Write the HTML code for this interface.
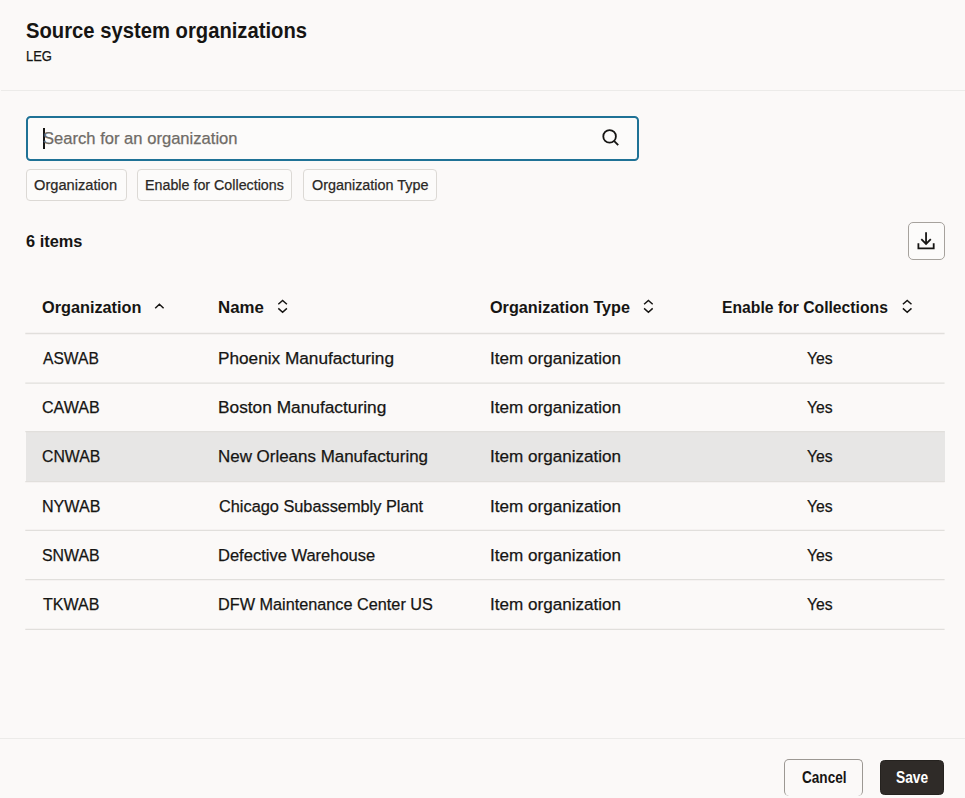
<!DOCTYPE html>
<html><head><meta charset="utf-8"><style>
html,body{margin:0;padding:0;}
body{width:965px;height:798px;overflow:hidden;background:#fbf9f8;position:relative;font-family:"Liberation Sans",sans-serif;}
.t{position:absolute;white-space:nowrap;transform-origin:0 0;}
.abs{position:absolute;box-sizing:border-box;}
</style></head><body>
<div class="abs" style="left:1px;top:90px;width:964px;height:1px;background:#ecebe9"></div>
<div class="abs" style="left:25.5px;top:116px;width:613.5px;height:44.6px;border:2px solid #1f7296;border-radius:4.5px;background:#fcfbfa"></div>
<div class="abs" style="left:42.7px;top:128px;width:2px;height:20.6px;background:#161513"></div>
<div class="abs" style="left:25.8px;top:169.3px;width:100.8px;height:31.9px;border:1px solid #dcd9d5;border-radius:4px;background:#fcfbfa"></div>
<div class="abs" style="left:137.2px;top:169.3px;width:155px;height:31.9px;border:1px solid #dcd9d5;border-radius:4px;background:#fcfbfa"></div>
<div class="abs" style="left:303.3px;top:169.3px;width:133.6px;height:31.9px;border:1px solid #dcd9d5;border-radius:4px;background:#fcfbfa"></div>
<div class="abs" style="left:907.5px;top:222px;width:37.2px;height:37.6px;border:1.4px solid #a6a29d;border-radius:5px;background:#fcfbfa"></div>
<div class="abs" style="left:26px;top:431.2px;width:918.6px;height:50.5px;background:#e7e6e5"></div>
<svg class="abs" style="left:0;top:0" width="965" height="798" viewBox="0 0 965 798">
<path d="M25.3 333.50 H944.6 M25.3 383.20 H944.6 M25.3 431.60 H944.6 M25.3 481.70 H944.6 M25.3 530.40 H944.6 M25.3 579.60 H944.6 M25.3 629.40 H944.6 " fill="none" stroke="#e1dfdc" stroke-width="1.3"/>
<g fill="none" stroke="#161513" stroke-width="1.5">
<path d="M155.2 308.3 L159.4 304.3 L163.6 308.3 M278.3 304.3 L282.6 300.5 L286.9 304.3 M278.3 308.4 L282.6 312.2 L286.9 308.4 M644.1 304.3 L648.4 300.5 L652.7 304.3 M644.1 308.4 L648.4 312.2 L652.7 308.4 M902.9 304.3 L907.2 300.5 L911.5 304.3 M902.9 308.4 L907.2 312.2 L911.5 308.4 "/>
</g>
<g fill="none" stroke="#161513" stroke-width="1.8">
<circle cx="609.6" cy="136.4" r="6.3"/>
<path d="M614.2 141.1 L618.2 145.2"/>
<path d="M918.4 243.2 V248.4 H933.7 V243.2"/>
<path d="M926.05 232.2 V243.8"/>
<path d="M921.3 239.1 L926.05 243.9 L930.8 239.1"/>
</g>
</svg>
<div class="abs" style="left:0;top:738px;width:965px;height:1px;background:#ecebe9"></div>
<div class="abs" style="left:784px;top:759px;width:79.3px;height:36.8px;border:1px solid #9c9893;border-bottom:0;border-radius:5px"></div>
<div class="abs" style="left:879.5px;top:759.5px;width:64.9px;height:35.3px;background:#2f2b28;border:1px solid #25221f;border-radius:4.5px"></div>

<div class="t" style="left:25.58px;top:20.17px;font-size:21.88px;line-height:21.88px;font-weight:700;color:#161513;transform:scaleX(0.9248);">Source system organizations</div>
<div class="t" style="left:25.88px;top:49.04px;font-size:14.49px;line-height:14.49px;font-weight:400;color:#161513;transform:scaleX(0.8958);-webkit-text-stroke:0.25px currentColor;">LEG</div>
<div class="t" style="left:42.97px;top:130.59px;font-size:16.67px;line-height:16.67px;font-weight:400;color:#6f6b66;transform:scaleX(0.9956);-webkit-text-stroke:0.25px currentColor;">Search for an organization</div>
<div class="t" style="left:34.39px;top:176.87px;font-size:15.51px;line-height:15.51px;font-weight:400;color:#2b2825;transform:scaleX(0.9447);-webkit-text-stroke:0.25px currentColor;">Organization</div>
<div class="t" style="left:145.38px;top:176.87px;font-size:15.51px;line-height:15.51px;font-weight:400;color:#2b2825;transform:scaleX(0.9210);-webkit-text-stroke:0.25px currentColor;">Enable for Collections</div>
<div class="t" style="left:311.85px;top:176.87px;font-size:15.51px;line-height:15.51px;font-weight:400;color:#2b2825;transform:scaleX(0.9275);-webkit-text-stroke:0.25px currentColor;">Organization Type</div>
<div class="t" style="left:26.08px;top:234.05px;font-size:16.81px;line-height:16.81px;font-weight:700;color:#161513;transform:scaleX(0.9739);">6 items</div>
<div class="t" style="left:42.22px;top:300.02px;font-size:16.96px;line-height:16.96px;font-weight:700;color:#161513;transform:scaleX(0.9607);">Organization</div>
<div class="t" style="left:217.96px;top:300.02px;font-size:16.96px;line-height:16.96px;font-weight:700;color:#161513;transform:scaleX(0.9934);">Name</div>
<div class="t" style="left:489.63px;top:300.01px;font-size:16.96px;line-height:16.96px;font-weight:700;color:#161513;transform:scaleX(0.9556);">Organization Type</div>
<div class="t" style="left:722.20px;top:300.01px;font-size:16.96px;line-height:16.96px;font-weight:700;color:#161513;transform:scaleX(0.9276);">Enable for Collections</div>
<div class="t" style="left:42.56px;top:349.82px;font-size:17.10px;line-height:17.10px;font-weight:400;color:#161513;transform:scaleX(0.9144);-webkit-text-stroke:0.25px currentColor;">ASWAB</div>
<div class="t" style="left:218.16px;top:349.82px;font-size:17.10px;line-height:17.10px;font-weight:400;color:#161513;transform:scaleX(1.0067);-webkit-text-stroke:0.25px currentColor;">Phoenix Manufacturing</div>
<div class="t" style="left:489.94px;top:349.82px;font-size:17.10px;line-height:17.10px;font-weight:400;color:#161513;transform:scaleX(0.9994);-webkit-text-stroke:0.25px currentColor;">Item organization</div>
<div class="t" style="left:806.90px;top:349.82px;font-size:17.10px;line-height:17.10px;font-weight:400;color:#161513;transform:scaleX(0.9223);-webkit-text-stroke:0.25px currentColor;">Yes</div>
<div class="t" style="left:42.09px;top:399.22px;font-size:17.10px;line-height:17.10px;font-weight:400;color:#161513;transform:scaleX(0.9413);-webkit-text-stroke:0.25px currentColor;">CAWAB</div>
<div class="t" style="left:218.14px;top:399.22px;font-size:17.10px;line-height:17.10px;font-weight:400;color:#161513;transform:scaleX(1.0119);-webkit-text-stroke:0.25px currentColor;">Boston Manufacturing</div>
<div class="t" style="left:489.94px;top:399.22px;font-size:17.10px;line-height:17.10px;font-weight:400;color:#161513;transform:scaleX(0.9994);-webkit-text-stroke:0.25px currentColor;">Item organization</div>
<div class="t" style="left:806.90px;top:399.22px;font-size:17.10px;line-height:17.10px;font-weight:400;color:#161513;transform:scaleX(0.9223);-webkit-text-stroke:0.25px currentColor;">Yes</div>
<div class="t" style="left:42.17px;top:448.12px;font-size:17.10px;line-height:17.10px;font-weight:400;color:#161513;transform:scaleX(0.9256);-webkit-text-stroke:0.25px currentColor;">CNWAB</div>
<div class="t" style="left:218.29px;top:448.12px;font-size:17.10px;line-height:17.10px;font-weight:400;color:#161513;transform:scaleX(0.9913);-webkit-text-stroke:0.25px currentColor;">New Orleans Manufacturing</div>
<div class="t" style="left:489.94px;top:448.12px;font-size:17.10px;line-height:17.10px;font-weight:400;color:#161513;transform:scaleX(0.9994);-webkit-text-stroke:0.25px currentColor;">Item organization</div>
<div class="t" style="left:806.90px;top:448.12px;font-size:17.10px;line-height:17.10px;font-weight:400;color:#161513;transform:scaleX(0.9223);-webkit-text-stroke:0.25px currentColor;">Yes</div>
<div class="t" style="left:41.69px;top:497.62px;font-size:17.10px;line-height:17.10px;font-weight:400;color:#161513;transform:scaleX(0.9405);-webkit-text-stroke:0.25px currentColor;">NYWAB</div>
<div class="t" style="left:218.83px;top:497.62px;font-size:17.10px;line-height:17.10px;font-weight:400;color:#161513;transform:scaleX(0.9546);-webkit-text-stroke:0.25px currentColor;">Chicago Subassembly Plant</div>
<div class="t" style="left:489.94px;top:497.62px;font-size:17.10px;line-height:17.10px;font-weight:400;color:#161513;transform:scaleX(0.9994);-webkit-text-stroke:0.25px currentColor;">Item organization</div>
<div class="t" style="left:806.90px;top:497.62px;font-size:17.10px;line-height:17.10px;font-weight:400;color:#161513;transform:scaleX(0.9223);-webkit-text-stroke:0.25px currentColor;">Yes</div>
<div class="t" style="left:41.77px;top:547.32px;font-size:17.10px;line-height:17.10px;font-weight:400;color:#161513;transform:scaleX(0.9296);-webkit-text-stroke:0.25px currentColor;">SNWAB</div>
<div class="t" style="left:218.44px;top:547.32px;font-size:17.10px;line-height:17.10px;font-weight:400;color:#161513;transform:scaleX(0.9659);-webkit-text-stroke:0.25px currentColor;">Defective Warehouse</div>
<div class="t" style="left:489.94px;top:547.32px;font-size:17.10px;line-height:17.10px;font-weight:400;color:#161513;transform:scaleX(0.9994);-webkit-text-stroke:0.25px currentColor;">Item organization</div>
<div class="t" style="left:806.90px;top:547.32px;font-size:17.10px;line-height:17.10px;font-weight:400;color:#161513;transform:scaleX(0.9223);-webkit-text-stroke:0.25px currentColor;">Yes</div>
<div class="t" style="left:43.11px;top:596.22px;font-size:17.10px;line-height:17.10px;font-weight:400;color:#161513;transform:scaleX(0.9369);-webkit-text-stroke:0.25px currentColor;">TKWAB</div>
<div class="t" style="left:217.79px;top:596.22px;font-size:17.10px;line-height:17.10px;font-weight:400;color:#161513;transform:scaleX(0.9504);-webkit-text-stroke:0.25px currentColor;">DFW Maintenance Center US</div>
<div class="t" style="left:489.94px;top:596.22px;font-size:17.10px;line-height:17.10px;font-weight:400;color:#161513;transform:scaleX(0.9994);-webkit-text-stroke:0.25px currentColor;">Item organization</div>
<div class="t" style="left:806.90px;top:596.22px;font-size:17.10px;line-height:17.10px;font-weight:400;color:#161513;transform:scaleX(0.9223);-webkit-text-stroke:0.25px currentColor;">Yes</div>
<div class="t" style="left:801.82px;top:769.92px;font-size:15.65px;line-height:15.65px;font-weight:700;color:#161513;transform:scaleX(0.8683);">Cancel</div>
<div class="t" style="left:895.91px;top:769.33px;font-size:16.23px;line-height:16.23px;font-weight:700;color:#ffffff;transform:scaleX(0.8486);">Save</div>
</body></html>
